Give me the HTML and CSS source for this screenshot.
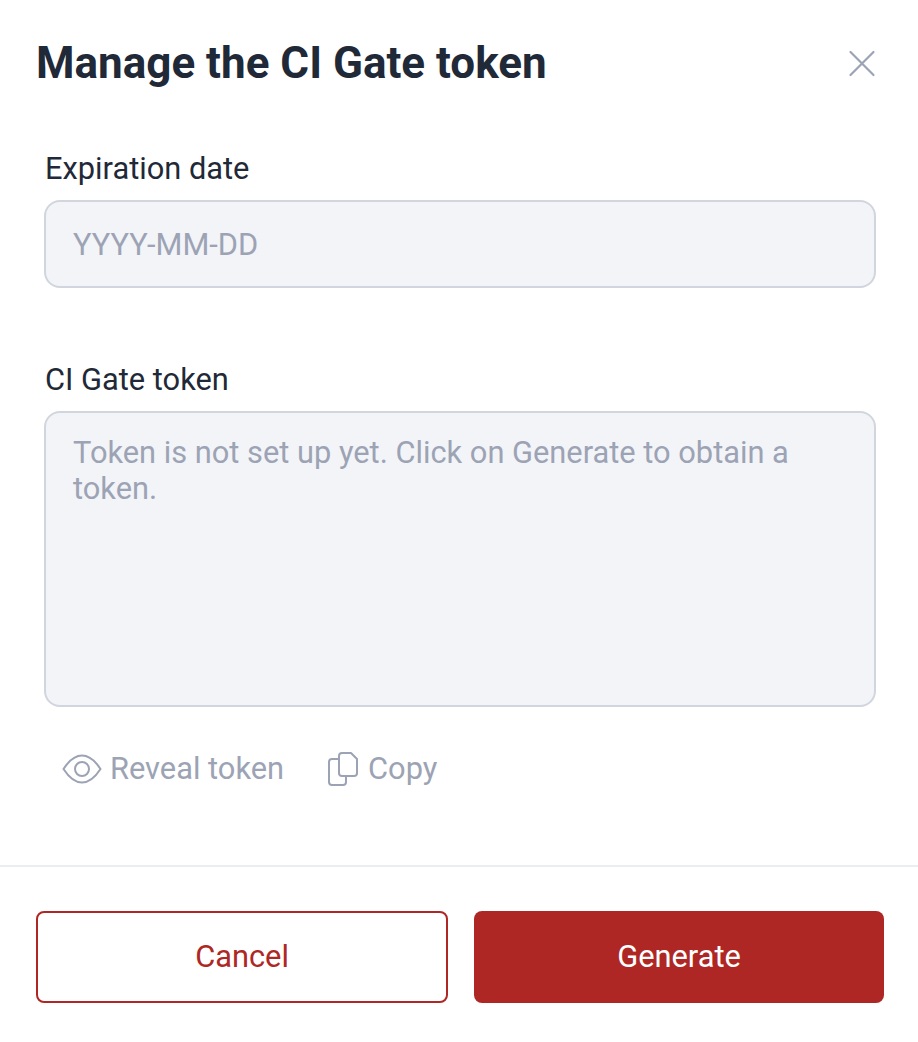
FILE: index.html
```html
<!DOCTYPE html>
<html lang="en">
<head>
  <meta charset="UTF-8" />
  <meta name="viewport" content="width=device-width, initial-scale=1.0" />
  <title>Manage the CI Gate token</title>
  <link rel="stylesheet" href="styles.css">
</head>
<body>
  <div class="dialog">
    <div class="dialog-header">
      <h1>Manage the CI Gate token</h1>
      <button class="close" aria-label="Close">
        <svg width="28" height="28" viewBox="0 0 28 28" fill="none" stroke="#9ca3b4" stroke-width="2.2" stroke-linecap="round">
          <path d="M2.5 3 L25.5 26 M25.5 3 L2.5 26" />
        </svg>
      </button>
    </div>

    <div class="dialog-body">
      <div class="field expiration">
        <label for="expiration">Expiration date</label>
        <input id="expiration" type="text" placeholder="YYYY-MM-DD" />
      </div>

      <div class="field">
        <label for="token">CI Gate token</label>
        <textarea id="token" placeholder="Token is not set up yet. Click on Generate to obtain a token."></textarea>
      </div>

      <div class="token-actions">
        <span class="action reveal">
          <svg width="40" height="32" viewBox="0 0 40 32" fill="none" stroke="#9ca3b4" stroke-width="2">
            <path d="M1.5 16 C7 7.5 13 2.5 20 2.5 C27 2.5 33 7.5 38.5 16 C33 24.5 27 29.5 20 29.5 C13 29.5 7 24.5 1.5 16 Z" />
            <circle cx="20" cy="16" r="7" />
          </svg>
          Reveal token
        </span>
        <span class="action copy">
          <svg width="30" height="34" viewBox="0 0 30 34" fill="none" stroke="#9ca3b4" stroke-width="2" stroke-linejoin="round">
            <path d="M14 1 H23 L29 7 V21 Q29 24 26 24 H14 Q11 24 11 21 V4 Q11 1 14 1 Z" />
            <path d="M11 7 H4 Q1 7 1 10 V30 Q1 33 4 33 H15 Q18 33 18 30 V24" />
          </svg>
          Copy
        </span>
      </div>
    </div>

    <div class="dialog-footer">
      <button class="btn btn-outline">Cancel</button>
      <button class="btn btn-primary">Generate</button>
    </div>
  </div>
</body>
</html>
```

FILE: styles.css
```css
:root {
  --text: #1f2937;
  --muted: #9ca3b4;
  --field-bg: #f3f4f8;
  --field-border: #d1d5de;
  --red: #ae2724;
}

* {
  box-sizing: border-box;
}

body {
  margin: 0;
  background: white;
  color: var(--text);
  font-family: Roboto, "Liberation Sans", sans-serif;
}

.dialog {
  width: 918px;
  height: 1042px;
  display: flex;
  flex-direction: column;
}

.dialog-header {
  display: flex;
  justify-content: space-between;
  align-items: center;
  padding: 36px 42px 0 36px;
  height: 90px;
}

h1 {
  margin: 0;
  font-size: 44px;
  line-height: 54px;
  font-weight: 700;
}

.close {
  padding: 0;
  border: none;
  background: none;
  display: flex;
}

.dialog-body {
  padding: 0 42px 0 44px;
  height: 777px;
  border-bottom: 2px solid #ecedf1;
}

.field {
  display: flex;
  flex-direction: column;
  gap: 11px;
}

.expiration {
  padding-top: 59px;
  margin-bottom: 72px;
}

label {
  padding-left: 1px;
  font-size: 30.8px;
  line-height: 40px;
  font-weight: 400;
}

input,
textarea {
  width: 100%;
  padding: 0 27px;
  border: 2px solid var(--field-border);
  border-radius: 16px;
  background: var(--field-bg);
  color: var(--text);
  font-family: inherit;
  font-size: 30.8px;
  outline: none;
}

input {
  height: 88px;
}

textarea {
  height: 296px;
  padding-top: 22px;
  line-height: 36px;
  resize: none;
  display: block;
}

input::placeholder,
textarea::placeholder {
  color: var(--muted);
  opacity: 1;
}

.token-actions {
  display: flex;
  align-items: center;
  gap: 44px;
  padding: 44px 0 0 18px;
}

.action {
  display: flex;
  align-items: center;
  gap: 10px;
  color: var(--muted);
  font-size: 30.8px;
  line-height: 36px;
}

.reveal {
  gap: 8px;
}

.dialog-footer {
  display: grid;
  grid-template-columns: 412px 410px;
  gap: 26px;
  padding: 44px 0 0 36px;
}

.btn {
  height: 92px;
  padding-bottom: 3px;
  border-radius: 8px;
  font-family: inherit;
  font-size: 30.8px;
  font-weight: 400;
}

.btn-outline {
  border: 2px solid var(--red);
  background: white;
  color: var(--red);
}

.btn-primary {
  border: none;
  background: var(--red);
  color: white;
}
```
